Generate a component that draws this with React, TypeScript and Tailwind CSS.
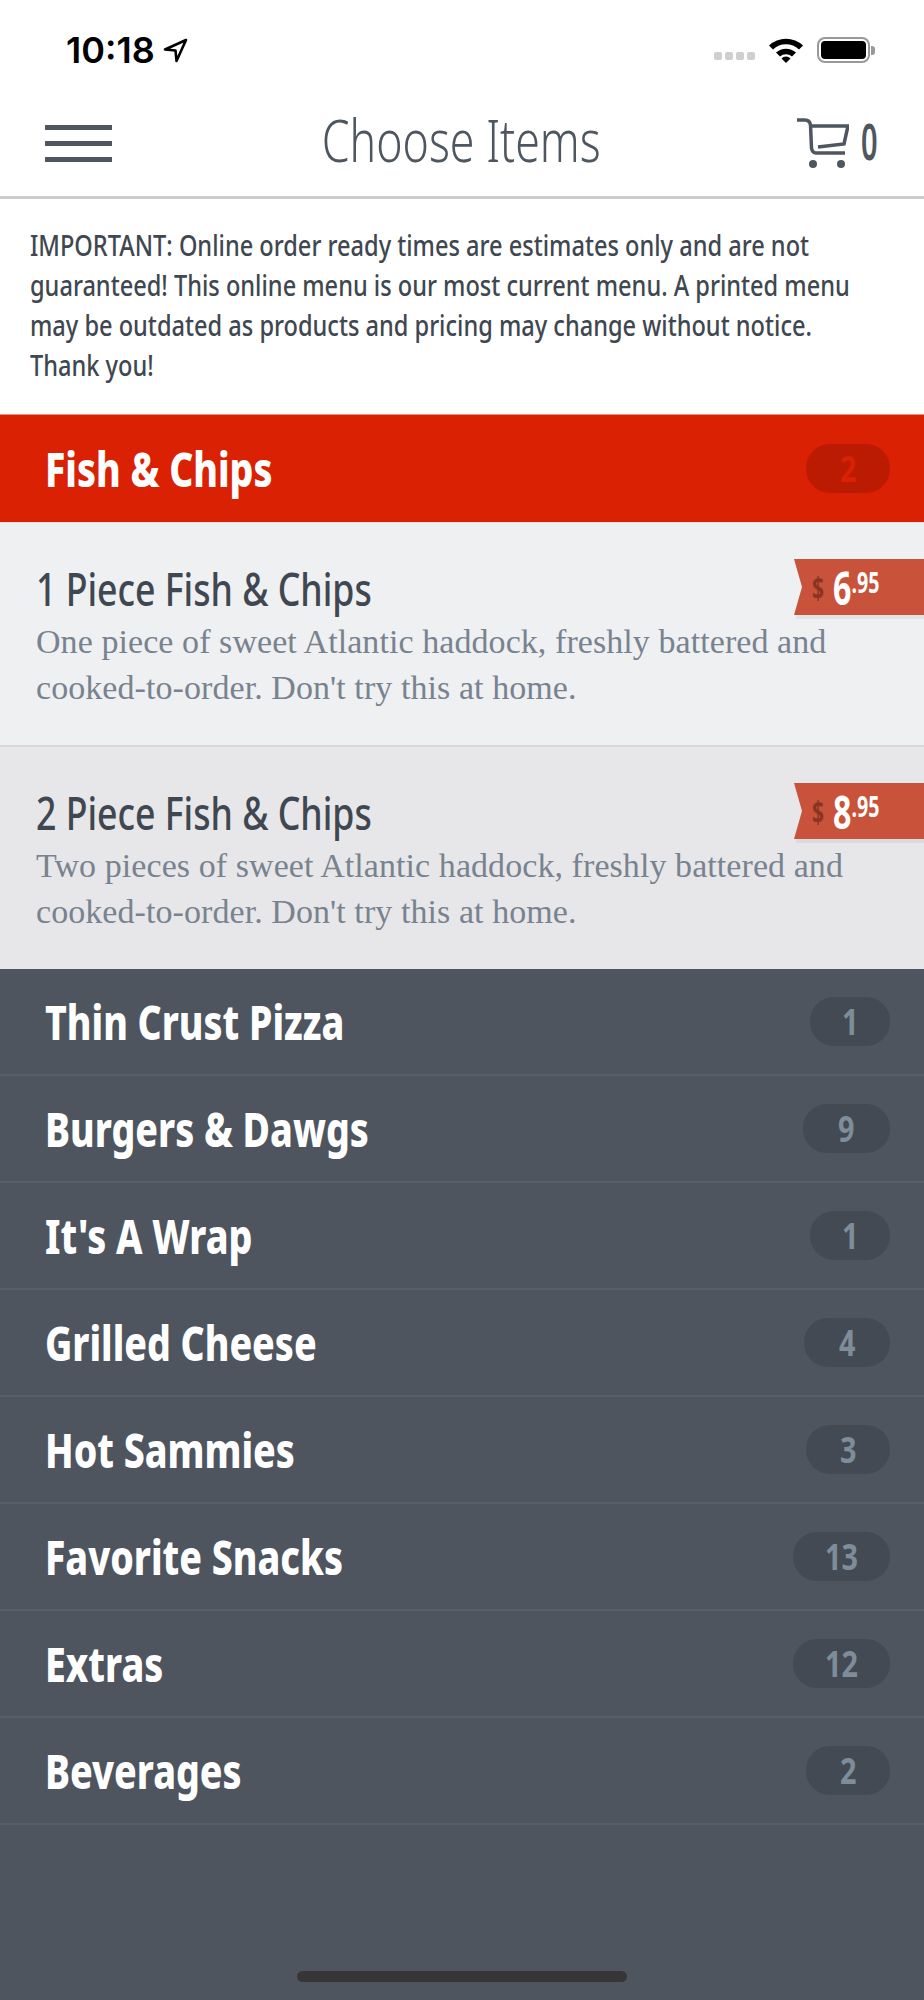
import React from 'react';

const CATEGORIES = [
  { name: 'Thin Crust Pizza', count: 1, w: 'w-[80px]' },
  { name: 'Burgers & Dawgs', count: 9, w: 'w-[87px]' },
  { name: "It's A Wrap", count: 1, w: 'w-[80px]' },
  { name: 'Grilled Cheese', count: 4, w: 'w-[86px]' },
  { name: 'Hot Sammies', count: 3, w: 'w-[84px]' },
  { name: 'Favorite Snacks', count: 13, w: 'w-[97px]' },
  { name: 'Extras', count: 12, w: 'w-[97px]' },
  { name: 'Beverages', count: 2, w: 'w-[84px]' },
];

const ITEMS = [
  {
    name: '1 Piece Fish & Chips',
    desc: "One piece of sweet Atlantic haddock, freshly battered and cooked-to-order. Don't try this at home.",
    dollars: '6',
    cents: '.95',
    bg: 'bg-[#eff0f2] border-t border-t-[#dde0e4] border-b-[2px] border-b-[#d8d8d8] h-[225px]',
  },
  {
    name: '2 Piece Fish & Chips',
    desc: "Two pieces of sweet Atlantic haddock, freshly battered and cooked-to-order. Don't try this at home.",
    dollars: '8',
    cents: '.95',
    bg: 'bg-[#e7e7e9] h-[222px]',
  },
];

const Item = ({ item }: { item: (typeof ITEMS)[number] }) => (
  <div className={`relative pl-[36px] pr-[40px] pt-[40px] ${item.bg}`}>
    <h3 className="-mt-[3px] mb-[3px] origin-left scale-x-[0.775] whitespace-nowrap font-['Noto_Sans',sans-serif] text-[46px] font-medium leading-[56px] text-[#3f4750]">{item.name}</h3>
    <p className="font-['Liberation_Serif',serif] text-[34px] leading-[46px] tracking-[0.07px] text-[#78838f]">{item.desc}</p>
    <div className="absolute right-0 top-[36px] h-[60px] w-[130px]">
      <div className="flex h-[56px] items-center bg-[#c9523a] pl-[18px] [clip-path:polygon(0_0,100%_0,100%_100%,0_100%,8px_50%)]">
        <div className="flex origin-left scale-x-[0.7] items-center font-['Noto_Sans',sans-serif] font-bold text-white">
          <span className="mr-[13px] text-[30px] text-[#8a3524]">$</span>
          <span className="text-[46px] leading-none">{item.dollars}</span>
          <span className="mt-[4px] self-start text-[28px] leading-none">{item.cents}</span>
        </div>
      </div>
      <div className="ml-[2px] h-[4px] bg-black/5" />
    </div>
  </div>
);

const Row = ({ name, count, active, w }: { name: string; count: number; active?: boolean; w: string }) => (
  <div className={`flex items-center justify-between pl-[45px] pr-[34px] ${active ? 'h-[108px] bg-[#db2104] border-t border-[#f0907f]' : 'h-[107px] border-b-[2px] border-[#575e68]'}`}>
    <span className="origin-left scale-x-[0.78] whitespace-nowrap font-['Noto_Sans',sans-serif] text-[48px] font-extrabold text-white">{name}</span>
    <span className={`flex h-[49px] ${w} items-center justify-center rounded-[24px] ${active ? 'bg-[#bb1a03] text-[#d92103]' : 'bg-[#434a54] text-[#7f8c9a]'}`}>
      <span className="scale-x-[0.8] font-['Noto_Sans',sans-serif] text-[36px] font-bold">{count}</span>
    </span>
  </div>
);

export default function App() {
  return (
    <div className="flex h-[2000px] w-[924px] flex-col overflow-hidden bg-[#4e555f]">
      <div className="flex h-[90px] items-center justify-between bg-white pl-[66px] pr-[49px] pt-[10px]">
        <div className="flex items-center gap-[8px]">
          <span className="font-['Inter',sans-serif] text-[36px] font-semibold text-black">10:18</span>
          <svg width="25" height="25" viewBox="0 0 25 25"><path d="M23 2 L2 11.5 L12.5 12.5 L13.5 23 Z" fill="none" stroke="#000" strokeWidth="2.6" strokeLinejoin="round" /></svg>
        </div>
        <div className="flex items-center">
          <div className="mt-[12px] mr-[13px] flex gap-[3px]">
            {[0, 1, 2, 3].map((d) => (
              <span key={d} className="h-[8px] w-[8px] rounded-[2px] bg-[#cfcfcf]" />
            ))}
          </div>
          <svg width="36" height="26" viewBox="0 0 36 26" className="mr-[13px]">
            <path d="M1 8.5 A25 25 0 0 1 35 8.5 L31 12.5 A19 19 0 0 0 5 12.5 Z" />
            <path d="M8 15.5 A15 15 0 0 1 28 15.5 L24 19.5 A9 9 0 0 0 12 19.5 Z" />
            <path d="M18 26 L13.5 21.5 A6 6 0 0 1 22.5 21.5 Z" />
          </svg>
          <div className="flex items-center">
            <div className="h-[26px] w-[53px] rounded-[8px] border-[2px] border-[#999] p-[2px]">
              <div className="h-full w-full rounded-[4px] bg-black" />
            </div>
            <div className="ml-[1px] h-[9px] w-[4px] rounded-r-[3px] bg-[#999]" />
          </div>
        </div>
      </div>

      <div className="grid h-[109px] grid-cols-[1fr_auto_1fr] items-center border-b-[3px] border-[#cccccc] bg-white pl-[45px] pr-[47px]">
        <div className="flex w-[67px] flex-col gap-[11px]">
          <span className="h-[5px] bg-[#4e5660]" />
          <span className="h-[5px] bg-[#4e5660]" />
          <span className="h-[5px] bg-[#4e5660]" />
        </div>
        <h1 className="scale-x-[0.757] whitespace-nowrap pb-[8px] font-['Noto_Sans',sans-serif] text-[59px] font-light text-[#4e5660]">Choose Items</h1>
        <div className="flex items-center justify-end gap-[12px]">
          <svg width="52" height="51" viewBox="0 0 52 51" fill="none" stroke="#4e5660" strokeWidth="3.5">
            <path d="M0 2 H8 C11 2 13 4 13.5 7 L14.5 30 C15 33 16 35 19 35 H48" />
            <path d="M14 8 H51 L47 26 L21 29" />
            <circle cx="16" cy="46" r="4" fill="#4e5660" stroke="none" />
            <circle cx="44" cy="46" r="4" fill="#4e5660" stroke="none" />
          </svg>
          <span className="flex w-[16px] justify-center pb-[4px]">
            <span className="scale-x-[0.58] font-['Noto_Sans',sans-serif] text-[50px] font-semibold leading-none text-[#4e5660]">0</span>
          </span>
        </div>
      </div>

      <div className="h-[215px] bg-white pl-[30px] pt-[26px]">
        <p className="w-[1030px] origin-left scale-x-[0.813] font-['Noto_Sans',sans-serif] text-[29px] font-medium leading-[40px] text-[#3f4750]">
          IMPORTANT: Online order ready times are estimates only and are not guaranteed! This online menu is our most current menu. A printed menu may be outdated as products and pricing may change without notice. Thank you!
        </p>
      </div>

      <Row name="Fish & Chips" count={2} active w="w-[84px]" />
      {ITEMS.map((item) => (
        <Item key={item.name} item={item} />
      ))}
      {CATEGORIES.map((c) => (
        <Row key={c.name} name={c.name} count={c.count} w={c.w} />
      ))}

      <div className="mt-auto mb-[18px] h-[11px] w-[330px] self-center rounded-[6px] bg-[#363636]" />
    </div>
  );
}
